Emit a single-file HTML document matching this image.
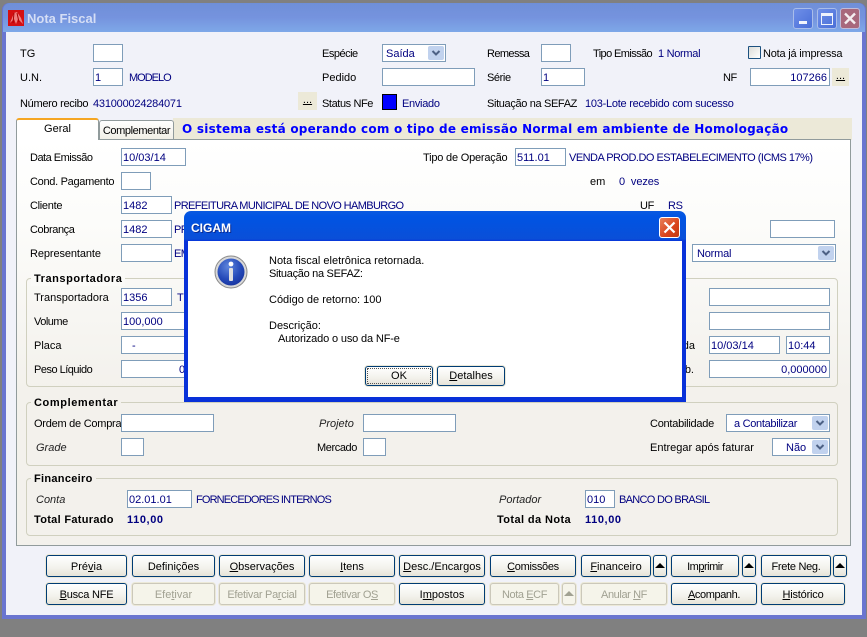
<!DOCTYPE html>
<html><head><meta charset="utf-8"><style>
html,body{margin:0;padding:0}
body{width:867px;height:637px;background:#808080;position:relative;overflow:hidden;font:11px/14px "Liberation Sans",sans-serif;color:#000}
div,u{box-sizing:border-box}
.a,.t,.v,.i,.s,.b,.g,.d,.l{position:absolute}
.t,.v,.l{white-space:nowrap;height:14px;margin-top:1px}
.v{color:#000080}
.i,.s{background:#fff;border:1px solid #7f9db9;color:#000080;height:18px;line-height:18px;padding-left:1px;white-space:nowrap}
.r{text-align:right;padding:0 2px 0 0}
.s svg{position:absolute;right:1px;top:1px}
.b{height:22px;border:1px solid #003c74;border-radius:3px;background:linear-gradient(#fff,#f3f2ec 60%,#e6e3d8);text-align:center;line-height:22px;box-shadow:0 0 0 1px #ece9d8;white-space:nowrap;overflow:hidden}
.d{height:22px;border:1px solid #cbc8ba;border-radius:3px;background:#f5f4ea;color:#a1a192;text-align:center;line-height:22px;box-shadow:0 0 0 1px #ece9d8;white-space:nowrap}
.g{border:1px solid #d0d0bf;border-radius:4px}
.l{font-weight:bold;padding:0 3px;left:31px}
.tri{display:block;width:0;height:0;border-left:5px solid transparent;border-right:5px solid transparent;border-bottom:5px solid #000;margin:7px auto 0}
.it{font-style:italic;color:#222}
.dots{background:#ece9d8;text-align:center;line-height:17px;height:18px;position:absolute}
</style></head><body>
<!-- window -->
<div class="a" style="left:2px;top:3px;width:864px;height:616px;background:#6a75d0;border-radius:7px 7px 0 0"></div>
<div class="a" style="left:3px;top:3px;width:862px;height:29px;border-radius:7px 7px 0 0;background:linear-gradient(#6f8fd8,#7593de 50%,#7ea8e8)"></div>
<div class="a" style="left:6px;top:32px;width:856px;height:583px;background:#f1f2f9"></div>
<svg class="a" style="left:8px;top:10px" width="16" height="16"><rect width="16" height="16" fill="#d40f12"/><path d="M2 13 L6 3 L9 2 L13 8 L15 14 L10 9 L8 14 L6 9Z" fill="#f08080"/><path d="M6 3 L5 13 M9 3 L11 12" stroke="#a00" stroke-width="1"/></svg>
<div class="t" style="left:27px;top:10px;font-weight:bold;font-size:13px;line-height:16px;height:16px;color:#d5def5">Nota Fiscal</div>
<!-- window buttons -->
<div class="a" style="left:793px;top:8px;width:20px;height:21px;border:1px solid #a9bdea;border-radius:3px;background:linear-gradient(135deg,#6f8fe8,#4a6fd8)"></div>
<div class="a" style="left:799px;top:21px;width:8px;height:3px;background:#f3f5fc"></div>
<div class="a" style="left:817px;top:8px;width:20px;height:21px;border:1px solid #a9bdea;border-radius:3px;background:linear-gradient(135deg,#6f8fe8,#4a6fd8)"></div>
<div class="a" style="left:821px;top:13px;width:12px;height:12px;border:1px solid #eef2fc;border-top-width:3px"></div>
<div class="a" style="left:840px;top:8px;width:20px;height:21px;border:1px solid #c0bcd8;border-radius:3px;background:#a8687c"></div>
<svg class="a" style="left:840px;top:8px" width="20" height="21"><path d="M5 5.500L15 15.500M15 5.500L5 15.500" stroke="#f4eef0" stroke-width="2.400"/></svg>
<!-- top form -->
<div class="t" style="left:20px;top:46px">TG</div><div class="i" style="left:93px;top:44px;width:30px"></div>
<div class="t" style="left:20px;top:70px">U.N.</div><div class="i" style="left:93px;top:68px;width:30px">1</div><div class="v" style="left:129px;top:70px;letter-spacing:-1px">MODELO</div>
<div class="t" style="left:20px;top:96px;letter-spacing:-.3px">Número recibo</div><div class="v" style="left:93px;top:96px;letter-spacing:-.2px">431000024284071</div>
<div class="dots" style="left:298px;top:92px;width:19px"><u>...</u></div>
<div class="t" style="left:322px;top:46px;letter-spacing:-.5px">Espécie</div>
<div class="s" style="left:382px;top:44px;width:64px;padding-left:3px">Saída<svg width="16" height="14"><rect width="16" height="14" rx="2" fill="#c1d2ee"/><path d="M4.500 5L8 8.500L11.500 5" fill="none" stroke="#4d6185" stroke-width="2"/></svg></div>
<div class="t" style="left:322px;top:70px">Pedido</div><div class="i" style="left:382px;top:68px;width:93px"></div>
<div class="t" style="left:322px;top:96px;letter-spacing:-.4px">Status NFe</div><div class="a" style="left:382px;top:94px;width:15px;height:16px;background:#0000ff;border:1px solid #000"></div><div class="v" style="left:402px;top:96px;letter-spacing:-.3px">Enviado</div>
<div class="t" style="left:487px;top:46px;letter-spacing:-.6px">Remessa</div><div class="i" style="left:541px;top:44px;width:30px"></div>
<div class="t" style="left:487px;top:70px;letter-spacing:-.4px">Série</div><div class="i" style="left:541px;top:68px;width:44px">1</div>
<div class="t" style="left:487px;top:96px;letter-spacing:-.35px">Situação na SEFAZ</div><div class="v" style="left:585px;top:96px;letter-spacing:-.25px">103-Lote recebido com sucesso</div>
<div class="t" style="left:593px;top:46px;letter-spacing:-.6px">Tipo Emissão</div><div class="v" style="left:658px;top:46px;letter-spacing:-.3px">1 Normal</div>
<div class="a" style="left:748px;top:46px;width:13px;height:13px;border:1px solid #1c5180;border-radius:1px;background:linear-gradient(135deg,#dcdcd7,#fff)"></div><div class="t" style="left:763px;top:46px;letter-spacing:-.2px">Nota já impressa</div>
<div class="t" style="left:723px;top:70px;letter-spacing:-.5px">NF</div><div class="i r" style="left:750px;top:68px;width:80px">107266</div>
<div class="dots" style="left:832px;top:68px;width:17px"><u>...</u></div>
<!-- tabs -->
<div class="a" style="left:173px;top:118px;width:679px;height:22px;background:#ece9d8"></div>
<div class="t" style="left:182px;top:121px;font:bold 12px/14px 'DejaVu Sans',sans-serif;color:#0000ff;letter-spacing:.24px">O sistema está operando com o tipo de emissão Normal em ambiente de Homologação</div>
<div class="a" style="left:16px;top:139px;width:835px;height:407px;border:1px solid #919b9c;border-top-color:#919b9c;background:linear-gradient(#fff,#fcfcfa 20%,#f3f1ec 62%)"></div>
<div class="a" style="left:99px;top:120px;width:75px;height:19px;border:1px solid #919b9c;border-bottom:none;border-radius:3px 3px 0 0;background:linear-gradient(#fff,#f1efe6);text-align:center;line-height:20px;letter-spacing:-.4px">Complementar</div>
<div class="a" style="left:16px;top:118px;width:83px;height:22px;border:1px solid #919b9c;border-bottom:none;border-top:2px solid #f5a623;border-radius:3px 3px 0 0;background:#fff;text-align:center;line-height:19px">Geral</div>
<!-- main -->
<div class="t" style="left:30px;top:150px;letter-spacing:-.5px">Data Emissão</div><div class="i" style="left:121px;top:148px;width:65px">10/03/14</div>
<div class="t" style="left:30px;top:174px;letter-spacing:-.3px">Cond. Pagamento</div><div class="i" style="left:121px;top:172px;width:30px"></div>
<div class="t" style="left:30px;top:198px;letter-spacing:-.3px">Cliente</div><div class="i" style="left:121px;top:196px;width:51px">1482</div><div class="v" style="left:174px;top:198px;letter-spacing:-.62px">PREFEITURA MUNICIPAL DE NOVO HAMBURGO</div>
<div class="t" style="left:30px;top:222px;letter-spacing:-.4px">Cobrança</div><div class="i" style="left:121px;top:220px;width:51px">1482</div><div class="v" style="left:174px;top:222px;letter-spacing:-.6px">PREFEITURA</div>
<div class="t" style="left:30px;top:246px;letter-spacing:-.1px">Representante</div><div class="i" style="left:121px;top:244px;width:51px"></div><div class="v" style="left:174px;top:246px;letter-spacing:-.6px">EMPRESA</div>
<div class="t" style="left:423px;top:150px;letter-spacing:-.2px">Tipo de Operação</div><div class="i" style="left:515px;top:148px;width:51px">511.01</div><div class="v" style="left:569px;top:150px;letter-spacing:-.52px">VENDA PROD.DO ESTABELECIMENTO (ICMS 17%)</div>
<div class="t" style="left:590px;top:174px">em</div><div class="v" style="left:619px;top:174px;letter-spacing:-.1px">0&nbsp; vezes</div>
<div class="t" style="left:640px;top:198px;letter-spacing:-.3px">UF</div><div class="v" style="left:668px;top:198px;letter-spacing:-.3px">RS</div>
<div class="i" style="left:770px;top:220px;width:65px"></div>
<div class="s" style="left:692px;top:244px;width:144px;padding-left:4px;letter-spacing:-.2px">Normal<svg width="16" height="14"><rect width="16" height="14" rx="2" fill="#c1d2ee"/><path d="M4.500 5L8 8.500L11.500 5" fill="none" stroke="#4d6185" stroke-width="2"/></svg></div>
<!-- Transportadora -->
<div class="g" style="left:26px;top:278px;width:812px;height:109px"></div>
<div class="l" style="top:271px;background:#fafaf7;letter-spacing:.55px">Transportadora</div>
<div class="t" style="left:34px;top:290px">Transportadora</div><div class="i" style="left:121px;top:288px;width:51px">1356</div><div class="v" style="left:177px;top:290px">TRANSP</div>
<div class="t" style="left:34px;top:314px;letter-spacing:-.5px">Volume</div><div class="i" style="left:121px;top:312px;width:80px">100,000</div>
<div class="t" style="left:34px;top:338px">Placa</div><div class="i" style="left:121px;top:336px;width:80px;padding-left:10px">-</div>
<div class="t" style="left:34px;top:362px;letter-spacing:-.5px">Peso Líquido</div><div class="i" style="left:121px;top:360px;width:80px;padding-left:57px">0,000</div>
<div class="i" style="left:709px;top:288px;width:121px"></div>
<div class="i" style="left:709px;top:312px;width:121px"></div>
<div class="t" style="right:172px;top:338px">Saída</div><div class="i" style="left:709px;top:336px;width:71px">10/03/14</div><div class="i" style="left:786px;top:336px;width:44px">10:44</div>
<div class="t" style="right:173px;top:362px">Peso Emb.</div>
<div class="i r" style="left:709px;top:360px;width:121px">0,000000</div>
<!-- Complementar -->
<div class="g" style="left:26px;top:402px;width:812px;height:64px"></div>
<div class="l" style="top:395px;background:#f3f1ec;letter-spacing:.6px">Complementar</div>
<div class="t" style="left:34px;top:416px;letter-spacing:-.25px">Ordem de Compra</div><div class="i" style="left:121px;top:414px;width:93px"></div>
<div class="t it" style="left:319px;top:416px">Projeto</div><div class="i" style="left:363px;top:414px;width:93px"></div>
<div class="t it" style="left:36px;top:440px">Grade</div><div class="i" style="left:121px;top:438px;width:23px"></div>
<div class="t" style="left:317px;top:440px;letter-spacing:-.4px">Mercado</div><div class="i" style="left:363px;top:438px;width:23px"></div>
<div class="t" style="left:650px;top:416px;letter-spacing:-.25px">Contabilidade</div>
<div class="s" style="left:726px;top:414px;width:104px;padding-left:7px;letter-spacing:-.3px">a Contabilizar<svg width="16" height="14"><rect width="16" height="14" rx="2" fill="#c1d2ee"/><path d="M4.500 5L8 8.500L11.500 5" fill="none" stroke="#4d6185" stroke-width="2"/></svg></div>
<div class="t" style="left:650px;top:440px">Entregar após faturar</div>
<div class="s" style="left:772px;top:438px;width:58px;padding-left:13px">Não<svg width="16" height="14"><rect width="16" height="14" rx="2" fill="#c1d2ee"/><path d="M4.500 5L8 8.500L11.500 5" fill="none" stroke="#4d6185" stroke-width="2"/></svg></div>
<!-- Financeiro -->
<div class="g" style="left:26px;top:478px;width:812px;height:58px"></div>
<div class="l" style="top:471px;background:#f3f1ec;letter-spacing:.3px">Financeiro</div>
<div class="t it" style="left:36px;top:492px">Conta</div><div class="i" style="left:127px;top:490px;width:65px">02.01.01</div><div class="v" style="left:196px;top:492px;letter-spacing:-.85px">FORNECEDORES INTERNOS</div>
<div class="t" style="left:34px;top:512px;font-weight:bold;letter-spacing:.3px">Total Faturado</div><div class="v" style="left:127px;top:512px;font-weight:bold;letter-spacing:.6px">110,00</div>
<div class="t it" style="left:499px;top:492px">Portador</div><div class="i" style="left:585px;top:490px;width:30px">010</div><div class="v" style="left:619px;top:492px;letter-spacing:-.7px">BANCO DO BRASIL</div>
<div class="t" style="left:497px;top:512px;font-weight:bold;letter-spacing:.4px">Total da Nota</div><div class="v" style="left:585px;top:512px;font-weight:bold;letter-spacing:.6px">110,00</div>
<!-- buttons -->
<div class="b" style="left:46px;top:555px;width:81px">Pré<u>v</u>ia</div>
<div class="b" style="left:132px;top:555px;width:83px">Definições</div>
<div class="b" style="left:219px;top:555px;width:86px"><u>O</u>bservações</div>
<div class="b" style="left:309px;top:555px;width:86px"><u>I</u>tens</div>
<div class="b" style="left:399px;top:555px;width:86px"><u>D</u>esc./Encargos</div>
<div class="b" style="left:490px;top:555px;width:86px;letter-spacing:-.3px"><u>C</u>omissões</div>
<div class="b" style="left:581px;top:555px;width:70px"><u>F</u>inanceiro</div>
<div class="b" style="left:653px;top:555px;width:14px"><span class="tri"></span></div>
<div class="b" style="left:671px;top:555px;width:68px;letter-spacing:-.5px">Im<u>p</u>rimir</div>
<div class="b" style="left:742px;top:555px;width:14px"><span class="tri"></span></div>
<div class="b" style="left:761px;top:555px;width:70px;letter-spacing:-.3px">Frete Neg.</div>
<div class="b" style="left:833px;top:555px;width:14px"><span class="tri"></span></div>
<div class="b" style="left:46px;top:583px;width:81px;letter-spacing:-.2px"><u>B</u>usca NFE</div>
<div class="d" style="left:132px;top:583px;width:83px">Efe<u>t</u>ivar</div>
<div class="d" style="left:219px;top:583px;width:86px;letter-spacing:-.3px">Efetivar Pa<u>r</u>cial</div>
<div class="d" style="left:309px;top:583px;width:86px;letter-spacing:-.4px">Efetivar O<u>S</u></div>
<div class="b" style="left:399px;top:583px;width:86px">I<u>m</u>postos</div>
<div class="d" style="left:490px;top:583px;width:69px;letter-spacing:-.4px">Nota <u>E</u>CF</div>
<div class="d" style="left:562px;top:583px;width:14px"><span class="tri" style="border-bottom-color:#a1a192"></span></div>
<div class="d" style="left:581px;top:583px;width:86px;letter-spacing:-.4px">Anular <u>N</u>F</div>
<div class="b" style="left:671px;top:583px;width:86px;letter-spacing:-.4px"><u>A</u>companh.</div>
<div class="b" style="left:761px;top:583px;width:84px;letter-spacing:-.2px"><u>H</u>istórico</div>
<!-- dialog -->
<div class="a" style="left:184px;top:211px;width:502px;height:191px;border-radius:7px 7px 0 0;background:#0831d9;background:linear-gradient(#0a5ae0 0,#0054e3 6px,#0a4fd8 28px,#0831d9 30px)"></div>
<div class="a" style="left:188px;top:241px;width:494px;height:156px;background:#fff"></div>
<div class="t" style="left:191px;top:219px;height:16px;line-height:16px;font-weight:bold;font-size:12px;color:#fff;text-shadow:1px 1px 0 #0a2a90">CIGAM</div>
<div class="a" style="left:659px;top:217px;width:21px;height:21px;border:1px solid #fff;border-radius:3px;background:linear-gradient(135deg,#e8805a,#d9431c 60%,#c23a12)"></div>
<svg class="a" style="left:659px;top:217px" width="21" height="21"><path d="M5.500 5.500L15.500 15.500M15.500 5.500L5.500 15.500" stroke="#fff" stroke-width="2.200"/></svg>
<svg class="a" style="left:214px;top:255px" width="34" height="34"><defs><radialGradient id="bl" cx=".4" cy=".3" r=".8"><stop offset="0" stop-color="#5f86dc"/><stop offset=".6" stop-color="#2449b8"/><stop offset="1" stop-color="#16309a"/></radialGradient></defs><circle cx="17" cy="17" r="16" fill="#d8d8d8" stroke="#8a8a8a"/><circle cx="17" cy="17" r="13.500" fill="url(#bl)"/><circle cx="17" cy="9" r="2.400" fill="#fff"/><rect x="15" y="13" width="4" height="13" rx="1" fill="#e0e0e0"/></svg>
<div class="t" style="left:269px;top:253px">Nota fiscal eletrônica retornada.</div>
<div class="t" style="left:269px;top:266px;letter-spacing:-.3px">Situação na SEFAZ:</div>
<div class="t" style="left:269px;top:292px">Código de retorno: 100</div>
<div class="t" style="left:269px;top:318px">Descrição:</div>
<div class="t" style="left:278px;top:331px;letter-spacing:-.15px">Autorizado o uso da NF-e</div>
<div class="b" style="left:365px;top:366px;width:68px;height:20px;line-height:19px"><span style="display:block;position:absolute;inset:1px;border:1px dotted #555"></span>OK</div>
<div class="b" style="left:437px;top:366px;width:68px;height:20px;line-height:19px"><u>D</u>etalhes</div>
</body></html>
